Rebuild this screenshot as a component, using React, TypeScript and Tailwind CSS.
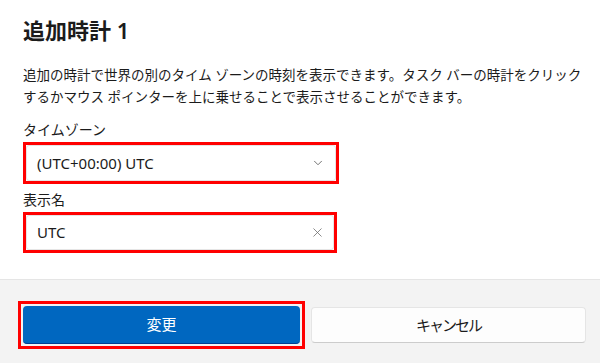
import { ChevronDown, X } from 'lucide-react';

const font = "font-['Noto_Sans','Noto_Sans_CJK_JP',sans-serif]";

export default function App() {
  return (
    <div className={`w-[600px] h-[363px] flex flex-col bg-white text-[#1b1b1b] ${font}`}>
      <div className="flex-1 flex flex-col pl-[23px] pt-[16px]">
        <h1 className="text-[22px] leading-[28px] font-semibold">追加時計 1</h1>

        <p className="mt-[20px] text-[13.5px] leading-[22px] whitespace-nowrap">
          追加の時計で世界の別のタイム ゾーンの時刻を表示できます。タスク バーの時計をクリック
          <br />
          するかマウス ポインターを上に乗せることで表示させることができます。
        </p>

        <label className="mt-[12px] text-[14px] leading-[20px]">タイムゾーン</label>
        <div className="mt-[2px] w-[316px] h-[42px] border-[3px] border-[#ff0000]">
          <div className="h-full flex items-center justify-between pl-[10px] pr-[10px] bg-white border border-[#e5e5e5] rounded-[3px]">
            <span className="text-[15px]">(UTC+00:00) UTC</span>
            <ChevronDown className="w-[14px] h-[14px] text-[#606060]" strokeWidth={1.5} />
          </div>
        </div>

        <label className="mt-[6px] text-[14px] leading-[20px]">表示名</label>
        <div className="mt-[2px] w-[314px] h-[41px] border-[3px] border-[#ff0000]">
          <div className="h-full flex items-center justify-between pl-[10px] pr-[8px] bg-white border border-[#e5e5e5] rounded-[3px]">
            <span className="text-[15px]">UTC</span>
            <X className="w-[15px] h-[15px] text-[#6a6a6a]" strokeWidth={1.25} />
          </div>
        </div>
      </div>

      <div className="h-[84px] bg-[#f3f3f3] border-t border-[#e5e5e5] flex gap-[6px] pl-[18px] pt-[21px]">
        <div className="w-[287px] h-[48px] border-[3px] border-[#ff0000] p-[2px]">
          <button className="w-full h-full rounded-[4px] bg-[#0067c0] border-b border-[#003e92] text-white text-[15px]">
            変更
          </button>
        </div>
        <button className="mt-[6px] w-[275px] h-[36px] rounded-[4px] bg-[#fdfdfd] border border-[#e5e5e5] border-b-[#cccccc] text-[15px] tracking-[-2px] text-[#1b1b1b]">
          キャンセル
        </button>
      </div>
    </div>
  );
}
